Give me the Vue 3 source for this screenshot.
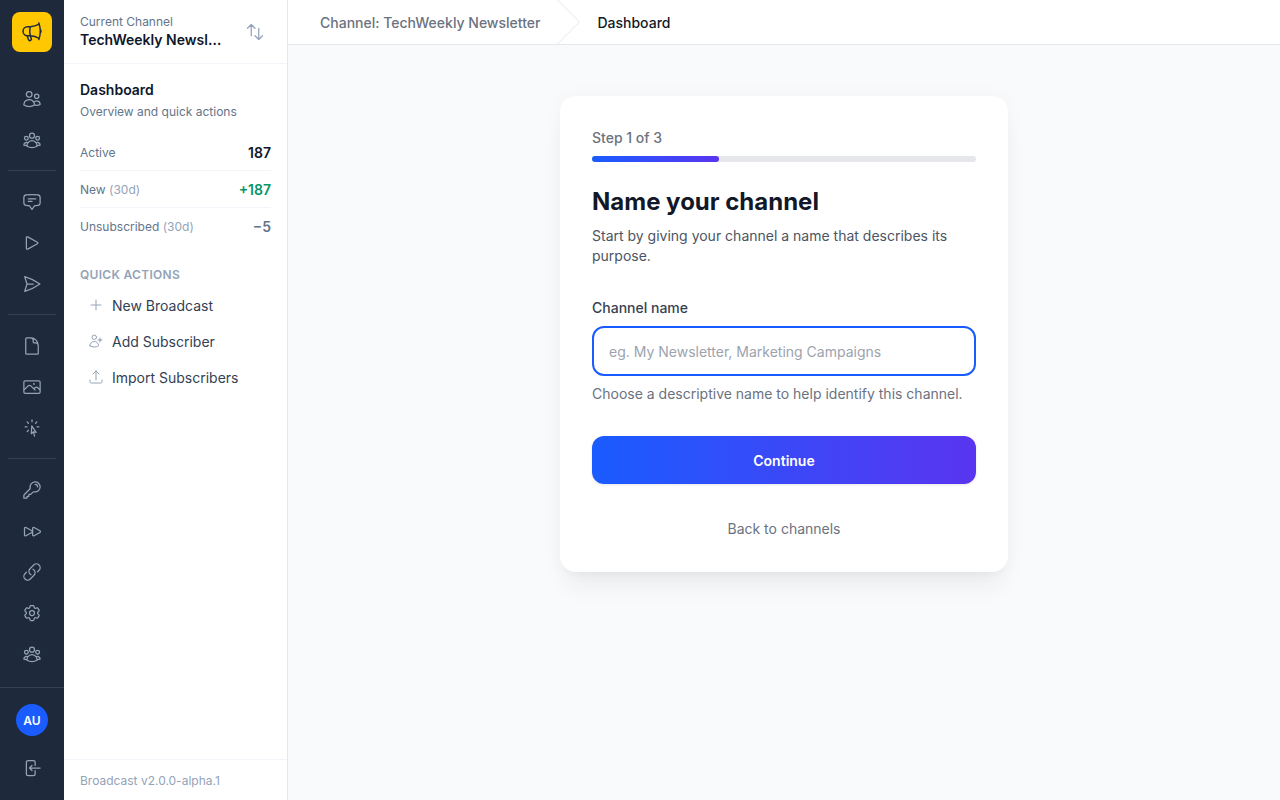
<template>
  <div class="app">
    <aside class="rail">
      <div class="logo">
        <svg class="logo-icon" viewBox="0 0 24 24" fill="none" stroke="currentColor" stroke-width="1.5" stroke-linecap="round" stroke-linejoin="round"><path :d="icons.megaphone" /></svg>
      </div>
      <nav class="rail-nav">
        <template v-for="(group, i) in railGroups" :key="i">
          <div v-if="i > 0" class="rail-divider"></div>
          <a v-for="name in group" :key="name" href="#" class="rail-item">
            <svg viewBox="0 0 24 24" fill="none" stroke="currentColor" stroke-width="1.5" stroke-linecap="round" stroke-linejoin="round"><path :d="icons[name]" /></svg>
          </a>
        </template>
      </nav>
      <div class="rail-bottom">
        <div class="avatar">AU</div>
        <a href="#" class="rail-item logout">
          <svg viewBox="0 0 24 24" fill="none" stroke="currentColor" stroke-width="1.5" stroke-linecap="round" stroke-linejoin="round"><path :d="icons.logout" /></svg>
        </a>
      </div>
    </aside>

    <aside class="sidebar">
      <div class="channel">
        <div class="channel-info">
          <div class="channel-label">Current Channel</div>
          <div class="channel-name">TechWeekly Newsletter</div>
        </div>
        <svg class="swap" viewBox="0 0 24 24" fill="none" stroke="currentColor" stroke-width="1.5" stroke-linecap="round" stroke-linejoin="round"><path :d="icons.swap" /></svg>
      </div>

      <div class="summary">
        <h2>Dashboard</h2>
        <p>Overview and quick actions</p>
      </div>

      <div class="stats">
        <div v-for="s in stats" :key="s.label" class="stat">
          <span class="stat-label">{{ s.label }} <span v-if="s.period" class="period">{{ s.period }}</span></span>
          <span class="stat-value" :class="s.tone">{{ s.value }}</span>
        </div>
      </div>

      <div class="actions">
        <h3>QUICK ACTIONS</h3>
        <a v-for="a in actions" :key="a.label" href="#" class="action">
          <svg viewBox="0 0 24 24" fill="none" stroke="currentColor" stroke-width="1.5" stroke-linecap="round" stroke-linejoin="round"><path :d="icons[a.icon]" /></svg>
          {{ a.label }}
        </a>
      </div>

      <div class="version">Broadcast v2.0.0-alpha.1</div>
    </aside>

    <div class="content">
      <header class="crumbs">
        <span class="crumb">Channel: TechWeekly Newsletter</span>
        <svg class="crumb-sep" viewBox="0 0 23 44" fill="none"><path d="M0.5 0 L22.5 22 L0.5 44" stroke="#e5e7eb" /></svg>
        <span class="crumb current">Dashboard</span>
      </header>

      <main class="main">
        <section class="card">
          <div class="step">Step 1 of 3</div>
          <div class="track"><div class="fill" :style="{ width: progress + '%' }"></div></div>
          <h1>Name your channel</h1>
          <p class="lead">Start by giving your channel a name that describes its purpose.</p>
          <label class="field-label" for="channel-name">Channel name</label>
          <input id="channel-name" v-model="name" class="field" type="text" placeholder="eg. My Newsletter, Marketing Campaigns" />
          <p class="hint">Choose a descriptive name to help identify this channel.</p>
          <button class="continue" type="button">Continue</button>
          <a href="#" class="back">Back to channels</a>
        </section>
      </main>
    </div>
  </div>
</template>

<script setup>
import { ref } from 'vue';

const name = ref('');
const progress = 33;

const icons = {
  megaphone: 'M10.34 15.84c-.688-.06-1.386-.09-2.09-.09H7.5a4.5 4.5 0 1 1 0-9h.75c.704 0 1.402-.03 2.09-.09m0 9.18c.253.962.584 1.892.985 2.783.247.55.06 1.21-.463 1.511l-.657.38c-.551.318-1.26.117-1.527-.461a20.845 20.845 0 0 1-1.44-4.282m3.102.069a18.03 18.03 0 0 1-.59-4.59c0-1.586.205-3.124.59-4.59m0 9.18a23.848 23.848 0 0 1 8.835 2.535M10.34 6.66a23.847 23.847 0 0 0 8.835-2.535m0 0A23.74 23.74 0 0 0 18.795 3m.38 1.125a23.91 23.91 0 0 1 1.014 5.395m-1.014 8.855c-.118.38-.245.754-.38 1.125m.38-1.125a23.91 23.91 0 0 0 1.014-5.395m0-3.46c.495.413.811 1.035.811 1.73 0 .695-.316 1.317-.811 1.73m0-3.46a24.347 24.347 0 0 1 0 3.46',
  users: 'M15 19.128a9.38 9.38 0 0 0 2.625.372 9.337 9.337 0 0 0 4.121-.952 4.125 4.125 0 0 0-7.533-2.493M15 19.128v-.003c0-1.113-.285-2.16-.786-3.07M15 19.128v.106A12.318 12.318 0 0 1 8.624 21c-2.331 0-4.512-.645-6.374-1.766l-.001-.109a6.375 6.375 0 0 1 11.964-3.07M12 6.375a3.375 3.375 0 1 1-6.75 0 3.375 3.375 0 0 1 6.75 0Zm8.25 2.25a2.625 2.625 0 1 1-5.25 0 2.625 2.625 0 0 1 5.25 0Z',
  group: 'M18 18.72a9.094 9.094 0 0 0 3.741-.479 3 3 0 0 0-4.682-2.72m.94 3.198.001.031c0 .225-.012.447-.037.666A11.944 11.944 0 0 1 12 21c-2.17 0-4.207-.576-5.963-1.584A6.062 6.062 0 0 1 6 18.719m12 0a5.971 5.971 0 0 0-.941-3.197m0 0A5.995 5.995 0 0 0 12 12.75a5.995 5.995 0 0 0-5.058 2.772m0 0a3 3 0 0 0-4.681 2.72 8.986 8.986 0 0 0 3.74.477m.94-3.197a5.971 5.971 0 0 0-.94 3.197M15 6.75a3 3 0 1 1-6 0 3 3 0 0 1 6 0Zm6 3a2.25 2.25 0 1 1-4.5 0 2.25 2.25 0 0 1 4.5 0Zm-13.5 0a2.25 2.25 0 1 1-4.5 0 2.25 2.25 0 0 1 4.5 0Z',
  chat: 'M7.5 8.25h9m-9 3H12m-9.75 1.51c0 1.6 1.123 2.994 2.707 3.227 1.129.166 2.27.293 3.423.379.35.026.67.21.865.501L12 21l2.755-4.133a1.14 1.14 0 0 1 .865-.501 48.172 48.172 0 0 0 3.423-.379c1.584-.233 2.707-1.626 2.707-3.228V6.741c0-1.602-1.123-2.995-2.707-3.228A48.394 48.394 0 0 0 12 3c-2.392 0-4.744.175-7.043.513C3.373 3.746 2.25 5.14 2.25 6.741v6.018Z',
  play: 'M5.25 5.653c0-.856.917-1.398 1.667-.986l11.54 6.347a1.125 1.125 0 0 1 0 1.972l-11.54 6.347a1.125 1.125 0 0 1-1.667-.986V5.653Z',
  send: 'M6 12 3.269 3.125A59.769 59.769 0 0 1 21.485 12 59.768 59.768 0 0 1 3.27 20.875L5.999 12Zm0 0h7.5',
  document: 'M19.5 14.25v-2.625a3.375 3.375 0 0 0-3.375-3.375h-1.5A1.125 1.125 0 0 1 13.5 7.125v-1.5a3.375 3.375 0 0 0-3.375-3.375H8.25m2.25 0H5.625c-.621 0-1.125.504-1.125 1.125v17.25c0 .621.504 1.125 1.125 1.125h12.75c.621 0 1.125-.504 1.125-1.125V11.25a9 9 0 0 0-9-9Z',
  photo: 'm2.25 15.75 5.159-5.159a2.25 2.25 0 0 1 3.182 0l5.159 5.159m-1.5-1.5 1.409-1.409a2.25 2.25 0 0 1 3.182 0l2.909 2.909m-18 3.75h16.5a1.5 1.5 0 0 0 1.5-1.5V6a1.5 1.5 0 0 0-1.5-1.5H3.75A1.5 1.5 0 0 0 2.25 6v12a1.5 1.5 0 0 0 1.5 1.5Zm10.5-11.25h.008v.008h-.008V8.25Zm.375 0a.375.375 0 1 1-.75 0 .375.375 0 0 1 .75 0Z',
  cursor: 'M15.042 21.672 13.684 16.6m0 0-2.51 2.225.569-9.47 5.227 7.917-3.286-.672ZM12 2.25V4.5m5.834.166-1.591 1.591M20.25 10.5H18M7.757 14.743l-1.59 1.59M6 10.5H3.75m4.007-4.243-1.59-1.59',
  key: 'M15.75 5.25a3 3 0 0 1 3 3m3 0a6 6 0 0 1-7.029 5.912c-.563-.097-1.159.026-1.563.43L10.5 17.25H8.25v2.25H6v2.25H2.25v-2.818c0-.597.237-1.17.659-1.591l6.499-6.499c.404-.404.527-1 .43-1.563A6 6 0 1 1 21.75 8.25Z',
  forward: 'M3 8.689c0-.864.933-1.406 1.683-.977l7.108 4.061a1.125 1.125 0 0 1 0 1.954l-7.108 4.061A1.125 1.125 0 0 1 3 16.811V8.69ZM12.75 8.689c0-.864.933-1.406 1.683-.977l7.108 4.061a1.125 1.125 0 0 1 0 1.954l-7.108 4.061a1.125 1.125 0 0 1-1.683-.977V8.69Z',
  link: 'M13.19 8.688a4.5 4.5 0 0 1 1.242 7.244l-4.5 4.5a4.5 4.5 0 0 1-6.364-6.364l1.757-1.757m13.35-.622 1.757-1.757a4.5 4.5 0 0 0-6.364-6.364l-4.5 4.5a4.5 4.5 0 0 0 1.242 7.244',
  cog: 'M9.594 3.94c.09-.542.56-.94 1.11-.94h2.593c.55 0 1.02.398 1.11.94l.213 1.281c.063.374.313.686.645.87.074.04.147.083.22.127.325.196.72.257 1.075.124l1.217-.456a1.125 1.125 0 0 1 1.37.49l1.296 2.247a1.125 1.125 0 0 1-.26 1.431l-1.003.827c-.293.241-.438.613-.43.992a7.723 7.723 0 0 1 0 .255c-.008.378.137.75.43.991l1.004.827c.424.35.534.955.26 1.43l-1.298 2.247a1.125 1.125 0 0 1-1.369.491l-1.217-.456c-.355-.133-.75-.072-1.076.124a6.47 6.47 0 0 1-.22.128c-.331.183-.581.495-.644.869l-.213 1.281c-.09.543-.56.94-1.11.94h-2.594c-.55 0-1.019-.398-1.11-.94l-.213-1.281c-.062-.374-.312-.686-.644-.87a6.52 6.52 0 0 1-.22-.127c-.325-.196-.72-.257-1.076-.124l-1.217.456a1.125 1.125 0 0 1-1.369-.49l-1.297-2.247a1.125 1.125 0 0 1 .26-1.431l1.004-.827c.292-.24.437-.613.43-.991a6.932 6.932 0 0 1 0-.255c.007-.38-.138-.751-.43-.992l-1.004-.827a1.125 1.125 0 0 1-.26-1.43l1.297-2.247a1.125 1.125 0 0 1 1.37-.491l1.216.456c.356.133.751.072 1.076-.124.072-.044.146-.086.22-.128.332-.183.582-.495.644-.869l.214-1.28ZM15 12a3 3 0 1 1-6 0 3 3 0 0 1 6 0Z',
  logout: 'M15.75 9V5.25A2.25 2.25 0 0 0 13.5 3h-6a2.25 2.25 0 0 0-2.25 2.25v13.5A2.25 2.25 0 0 0 7.5 21h6a2.25 2.25 0 0 0 2.25-2.25V15M12 9l-3 3m0 0 3 3m-3-3h12.75',
  swap: 'M3 7.5 7.5 3m0 0L12 7.5M7.5 3v13.5m13.5 0L16.5 21m0 0L12 16.5m4.5 4.5V7.5',
  plus: 'M12 4.5v15m7.5-7.5h-15',
  userPlus: 'M18 7.5v3m0 0v3m0-3h3m-3 0h-3m-2.25-4.125a3.375 3.375 0 1 1-6.75 0 3.375 3.375 0 0 1 6.75 0ZM3 19.235v-.11a6.375 6.375 0 0 1 12.75 0v.109A12.318 12.318 0 0 1 9.374 21c-2.331 0-4.512-.645-6.374-1.766Z',
  upload: 'M3 16.5v2.25A2.25 2.25 0 0 0 5.25 21h13.5A2.25 2.25 0 0 0 21 18.75V16.5m-13.5-9L12 3m0 0 4.5 4.5M12 3v13.5'
};

const railGroups = [
  ['users', 'group'],
  ['chat', 'play', 'send'],
  ['document', 'photo', 'cursor'],
  ['key', 'forward', 'link', 'cog', 'group']
];

const stats = [
  { label: 'Active', value: '187', tone: '' },
  { label: 'New', period: '(30d)', value: '+187', tone: 'up' },
  { label: 'Unsubscribed', period: '(30d)', value: '−5', tone: 'down' }
];

const actions = [
  { label: 'New Broadcast', icon: 'plus' },
  { label: 'Add Subscriber', icon: 'userPlus' },
  { label: 'Import Subscribers', icon: 'upload' }
];
</script>

<style>
html,
body {
  margin: 0;
  padding: 0;
}
</style>

<style scoped>
.app {
  display: flex;
  height: 100vh;
  overflow: hidden;
  font-family: Inter, "Liberation Sans", sans-serif;
  color: #111827;
  background: #f9fafb;
}

a {
  text-decoration: none;
  color: inherit;
}

/* icon rail */
.rail {
  width: 64px;
  flex-shrink: 0;
  display: flex;
  flex-direction: column;
  background: #1e293b;
  color: #94a3b8;
}

.logo {
  width: 40px;
  height: 40px;
  margin: 12px 12px 26px;
  border-radius: 8px;
  background: #ffc700;
  color: #1e293b;
  display: grid;
  place-items: center;
}

.logo-icon {
  width: 24px;
  height: 24px;
}

.rail-nav {
  flex: 1;
  display: flex;
  flex-direction: column;
}

.rail-item {
  height: 41px;
  display: grid;
  place-items: center;
}

.rail-item svg {
  width: 20px;
  height: 20px;
}

.rail-divider {
  height: 1px;
  margin: 10px 8px;
  background: #334155;
}

.rail-bottom {
  height: 113px;
  box-sizing: border-box;
  border-top: 1px solid #334155;
  display: flex;
  flex-direction: column;
  align-items: center;
  padding-top: 16px;
}

.avatar {
  width: 32px;
  height: 32px;
  border-radius: 50%;
  background: #1a5cff;
  color: #fff;
  font-size: 12px;
  font-weight: 600;
  display: grid;
  place-items: center;
}

.logout {
  margin-top: 11px;
}

/* channel sidebar */
.sidebar {
  width: 224px;
  flex-shrink: 0;
  box-sizing: border-box;
  display: flex;
  flex-direction: column;
  background: #fff;
  border-right: 1px solid #e5e7eb;
}

.channel {
  height: 64px;
  box-sizing: border-box;
  padding: 0 22px 0 16px;
  display: flex;
  align-items: center;
  justify-content: space-between;
  border-bottom: 1px solid #f1f5f9;
}

.channel-info {
  width: 148px;
}

.channel-label {
  font-size: 12px;
  line-height: 16px;
  color: #64748b;
}

.channel-name {
  font-size: 14px;
  line-height: 20px;
  font-weight: 600;
  color: #0f172a;
  white-space: nowrap;
  overflow: hidden;
  text-overflow: ellipsis;
}

.swap {
  width: 20px;
  height: 20px;
  color: #94a3b8;
}

.summary {
  padding: 16px 16px 0;
}

.summary h2 {
  margin: 0;
  font-size: 14px;
  line-height: 20px;
  font-weight: 600;
  color: #0f172a;
}

.summary p {
  margin: 4px 0 0;
  font-size: 12px;
  line-height: 16px;
  color: #64748b;
}

.stats {
  padding: 14px 16px 0;
}

.stat {
  height: 37px;
  box-sizing: border-box;
  display: flex;
  align-items: center;
  justify-content: space-between;
  border-bottom: 1px solid #f1f5f9;
}

.stat:last-child {
  border-bottom: 0;
}

.stat-label {
  font-size: 12px;
  color: #64748b;
}

.period {
  color: #94a3b8;
}

.stat-value {
  font-size: 14px;
  font-weight: 600;
  color: #0f172a;
}

.stat-value.up {
  color: #059669;
}

.stat-value.down {
  color: #64748b;
}

.actions {
  flex: 1;
  padding: 22px 16px 0;
}

.actions h3 {
  margin: 0 0 4px;
  font-size: 12px;
  line-height: 16px;
  font-weight: 600;
  letter-spacing: 0.3px;
  color: #94a3b8;
}

.action {
  height: 36px;
  padding-left: 8px;
  display: flex;
  align-items: center;
  gap: 8px;
  font-size: 14px;
  color: #334155;
}

.action svg {
  width: 16px;
  height: 16px;
  color: #94a3b8;
}

.version {
  height: 41px;
  box-sizing: border-box;
  padding: 0 16px;
  display: flex;
  align-items: center;
  border-top: 1px solid #f1f5f9;
  font-size: 12px;
  color: #94a3b8;
}

/* main area */
.content {
  flex: 1;
  min-width: 0;
  display: flex;
  flex-direction: column;
}

.crumbs {
  height: 45px;
  box-sizing: border-box;
  flex-shrink: 0;
  display: flex;
  align-items: center;
  padding-left: 32px;
  background: #fff;
  border-bottom: 1px solid #e5e7eb;
}

.crumb {
  font-size: 14px;
  font-weight: 500;
  color: #6b7280;
}

.crumb.current {
  color: #111827;
}

.crumb-sep {
  width: 23px;
  height: 44px;
  margin: 0 17px;
}

.main {
  flex: 1;
  display: flex;
  justify-content: center;
  padding-top: 51px;
  background: #f9fafb;
}

.card {
  width: 448px;
  height: 476px;
  box-sizing: border-box;
  padding: 32px;
  display: flex;
  flex-direction: column;
  background: #fff;
  border-radius: 16px;
  box-shadow: 0 20px 25px -5px rgba(0, 0, 0, 0.05), 0 8px 10px -6px rgba(0, 0, 0, 0.03), 0 0 20px rgba(0, 0, 0, 0.03);
}

.step {
  font-size: 14px;
  line-height: 20px;
  font-weight: 500;
  color: #6b7280;
}

.track {
  height: 6px;
  margin-top: 8px;
  border-radius: 3px;
  background: #e5e7eb;
}

.fill {
  height: 100%;
  border-radius: 3px;
  background: linear-gradient(90deg, #1a5cff, #5a35f0);
}

h1 {
  margin: 24px 0 0;
  font-size: 24px;
  line-height: 32px;
  font-weight: 700;
  color: #111827;
}

.lead {
  margin: 8px 0 0;
  font-size: 14px;
  line-height: 20px;
  color: #4b5563;
}

.field-label {
  margin-top: 32px;
  font-size: 14px;
  line-height: 20px;
  font-weight: 500;
  color: #374151;
}

.field {
  height: 50px;
  box-sizing: border-box;
  margin-top: 8px;
  padding: 0 15px;
  border: 2px solid #1a5cff;
  border-radius: 12px;
  outline: none;
  font: inherit;
  font-size: 14px;
  color: #111827;
}

.field::placeholder {
  color: #9ca3af;
}

.hint {
  margin: 8px 0 0;
  font-size: 14px;
  line-height: 20px;
  color: #6b7280;
}

.continue {
  height: 48px;
  margin-top: 32px;
  border: 0;
  border-radius: 12px;
  background: linear-gradient(90deg, #1a5cff, #5a35f0);
  box-shadow: 0 1px 3px rgba(0, 0, 0, 0.1);
  color: #fff;
  font: inherit;
  font-size: 14px;
  font-weight: 600;
  cursor: pointer;
}

.back {
  margin-top: 35px;
  text-align: center;
  font-size: 14px;
  line-height: 20px;
  color: #6b7280;
}
</style>
